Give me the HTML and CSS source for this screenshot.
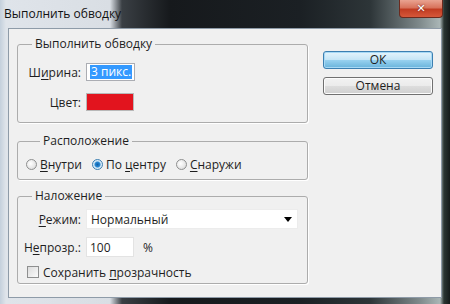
FILE: index.html
```html
<!DOCTYPE html>
<html lang="ru">
<head>
  <meta charset="UTF-8" />
  <title>Выполнить обводку</title>
  <link rel="stylesheet" href="styles.css">
</head>
<body>
  <div class="window">
    <div class="titlebar">
      <span class="titlebar__text">Выполнить обводку</span>
      <span class="titlebar__close">&#x2715;</span>
    </div>

    <div class="client">
      <div class="client__left">
        <fieldset class="group group--stroke">
          <legend>Выполнить обводку</legend>
          <div class="grid">
            <label class="grid__label">Ш<u>и</u>рина:</label>
            <div class="field field--small"><span class="field__sel">3 пикс.</span></div>

            <label class="grid__label">Цвет:</label>
            <div class="swatch"></div>
          </div>
        </fieldset>

        <fieldset class="group group--place">
          <legend>Расположение</legend>
          <div class="radios">
            <label class="radio"><span class="radio__dot"></span><span><u>В</u>нутри</span></label>
            <label class="radio"><span class="radio__dot radio__dot--on"></span><span>По <u>ц</u>ентру</span></label>
            <label class="radio"><span class="radio__dot"></span><span><u>С</u>наружи</span></label>
          </div>
        </fieldset>

        <fieldset class="group group--blend">
          <legend>Наложение</legend>
          <div class="grid grid--blend">
            <label class="grid__label"><u>Р</u>ежим:</label>
            <div class="select">
              <span>Нормальный</span>
              <span class="select__arrow"></span>
            </div>

            <label class="grid__label">Н<u>е</u>прозр.:</label>
            <div class="row">
              <div class="field field--num">100</div>
              <span class="row__unit">%</span>
            </div>
          </div>
          <label class="check">
            <span class="check__box"></span><span>Сохранить <u>п</u>розрачность</span>
          </label>
        </fieldset>
      </div>

      <div class="client__right">
        <button class="btn btn--default">ОК</button>
        <button class="btn">Отмена</button>
      </div>
    </div>
  </div>
</body>
</html>
```

FILE: styles.css
```css
html, body {
  margin: 0;
  height: 100%;
}

body {
  font-family: 'Open Sans', 'Noto Sans', sans-serif;
  font-size: 12px;
  color: #1e1e1e;
  overflow: hidden;
}

u {
  text-decoration-thickness: 1px;
  text-underline-offset: 2px;
}

.window {
  width: 450px;
  height: 304px;
  display: flex;
  flex-direction: column;
  background: linear-gradient(to right, #c4d0dc 0, #dfe4ea 6px, #d9dee4 110px, #3a3f44 122px, #16191c 170px, #1b2024 300px, #2d3538 370px, #7f8a8c 420px, #aab6b6 440px, #2a3532 444px, #141a1a 450px);
}

.titlebar {
  height: 28px;
  display: flex;
  align-items: flex-start;
}

.titlebar__text {
  padding: 6px 0 0 4px;
  line-height: 16px;
  color: #111;
}

.titlebar__close {
  margin-left: auto;
  margin-right: 7px;
  width: 44px;
  height: 18px;
  box-sizing: border-box;
  border: 1px solid #6b2a1e;
  border-top: none;
  border-radius: 0 0 4px 4px;
  background: linear-gradient(#e9a391 0, #d8735c 45%, #c13c22 55%, #d6573a 100%);
  color: #fff;
  font-family: 'DejaVu Sans', sans-serif;
  font-weight: bold;
  font-size: 11px;
  line-height: 17px;
  text-align: center;
  text-shadow: 0 0 2px #5a1a10;
}

.client {
  margin: 0 8px;
  height: 270px;
  box-sizing: border-box;
  background: #f0f0f0;
  border: 1px solid #8e9ba8;
  display: flex;
  gap: 15px;
  padding: 7px 8px 0 8px;
}

.client__left {
  width: 291px;
  display: flex;
  flex-direction: column;
}

.client__right {
  width: 110px;
  display: flex;
  flex-direction: column;
  gap: 8px;
  padding-top: 15px;
}

/* рамки групп */
.group {
  margin: 0;
  padding: 0;
  border: 1px solid #acacac;
  border-radius: 3px;
  box-shadow: 1px 1px 0 #fff;
}

.group legend {
  margin-left: 14px;
  padding: 0 3px;
  line-height: 16px;
}

.group--stroke {
  padding: 11px 0 11px;
}

.group--place {
  margin-top: 10px;
  padding: 7px 0 7px 8px;
}

.group--blend {
  margin-top: 8px;
  padding: 5px 0 3px;
}

.grid {
  display: grid;
  grid-template-columns: 63px 1fr;
  column-gap: 5px;
  row-gap: 12px;
  align-items: center;
}

.grid--blend {
  row-gap: 8px;
}

.grid__label {
  text-align: right;
}

.field {
  height: 18px;
  background: #fff;
  box-sizing: border-box;
  border: 1px solid #e3e3e3;
  display: flex;
  align-items: center;
  padding-left: 3px;
}

.field--small {
  width: 49px;
  border-color: #abadb3;
}

.field__sel {
  background: #3399ff;
  color: #fff;
  line-height: 14px;
  padding: 0 1px;
}

.swatch {
  width: 48px;
  height: 18px;
  box-sizing: border-box;
  background: #e2141e;
  border: 1px solid #b8b8b8;
}

.radios {
  display: flex;
  height: 16px;
  align-items: center;
}

.radio {
  display: flex;
  align-items: center;
  gap: 3px;
  margin-right: 10px;
}

.radio__dot {
  width: 11px;
  height: 11px;
  box-sizing: border-box;
  border-radius: 50%;
  border: 1px solid #8e8f8f;
  background: radial-gradient(circle at 40% 40%, #fff 0, #e6e6e6 60%, #d0d0d0 100%);
}

.radio__dot--on {
  border-color: #3c7fb1;
  background: radial-gradient(circle, #0c5ea8 0, #2a8ad4 2.5px, #cfe6f6 3.5px, #f4f4f4 100%);
}

.select {
  width: 212px;
  height: 20px;
  box-sizing: border-box;
  background: #fff;
  border: 1px solid #ececec;
  display: flex;
  align-items: center;
  padding: 0 5px 0 4px;
}

.select__arrow {
  margin-left: auto;
  width: 0;
  height: 0;
  border-left: 4px solid transparent;
  border-right: 4px solid transparent;
  border-top: 5px solid #000;
}

.row {
  display: flex;
  align-items: center;
  gap: 9px;
}

.field--num {
  width: 48px;
  height: 20px;
}

.check {
  display: flex;
  align-items: center;
  gap: 4px;
  margin: 7px 0 0 9px;
  height: 16px;
}

.check__box {
  width: 12px;
  height: 12px;
  box-sizing: border-box;
  border: 1px solid #8e8f8f;
  background: linear-gradient(135deg, #dcdcdc, #fbfbfb);
}

/* кнопки */
.btn {
  height: 18px;
  padding: 0;
  font: inherit;
  color: #1e1e1e;
  line-height: 16px;
  border: 1px solid #707070;
  border-radius: 3px;
  background: linear-gradient(#f2f2f2 0, #ebebeb 50%, #dddddd 51%, #cfcfcf 100%);
  box-shadow: inset 0 0 0 1px #fcfcfc;
}

.btn--default {
  border-color: #3c7fb1;
  background: linear-gradient(#e5f4fc 0, #c4e5f6 50%, #98d1ef 51%, #68b3db 100%);
  box-shadow: inset 0 0 0 1px #a7d9f5;
}
```
